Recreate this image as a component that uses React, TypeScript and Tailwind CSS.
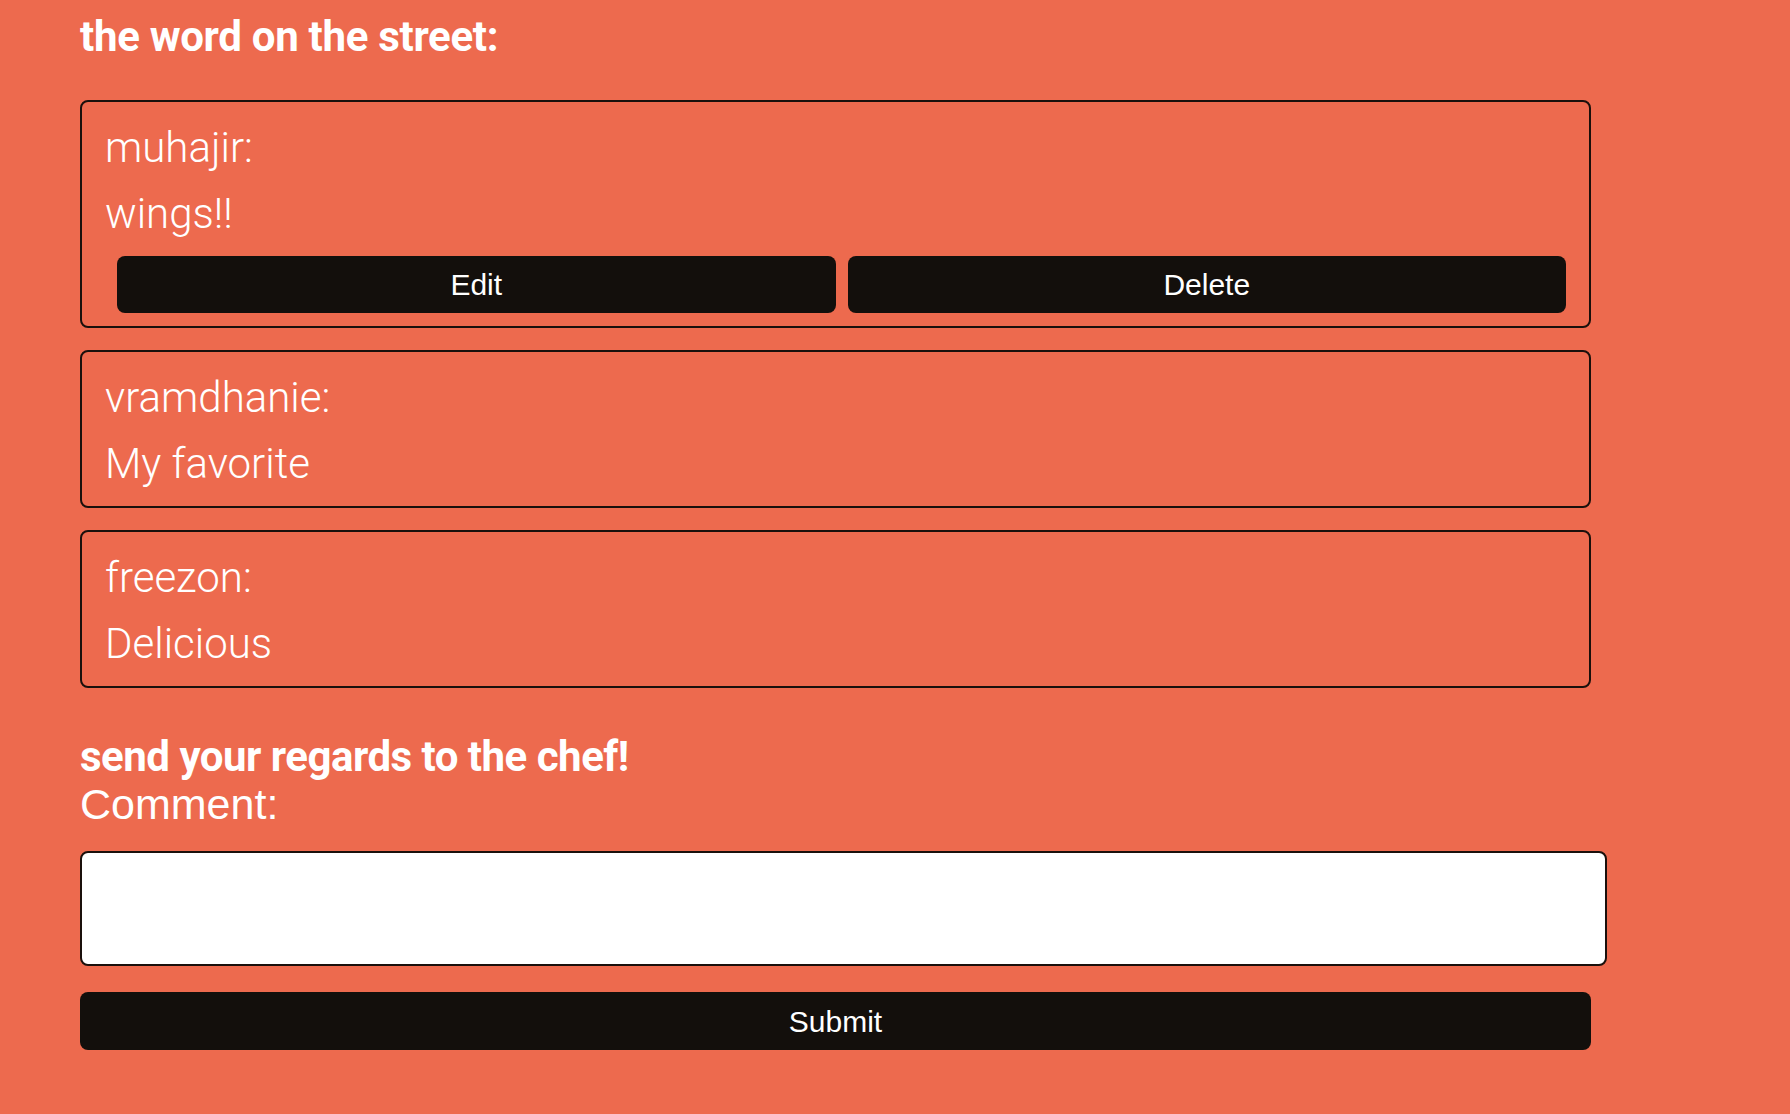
const comments = [
  { user: "muhajir", text: "wings!!", own: true },
  { user: "vramdhanie", text: "My favorite", own: false },
  { user: "freezon", text: "Delicious", own: false },
];

const CommentCard = ({ user, text, own }: { user: string; text: string; own: boolean }) => {
  return (
    <div
      className={`border-2 border-[#1a100c] rounded-lg px-[23px] pt-[21px] ${own ? "pb-[13px]" : "pb-[17px]"}`}
    >
      <p className="text-[42px] leading-[50px] font-light mb-4">{user}:</p>
      <p className="text-[42px] leading-[50px] font-light">{text}</p>
      {own && (
        <div className="flex mt-[17px]">
          <button className="flex-1 ml-3 h-[57px] rounded-lg bg-[#130f0c] text-white text-[30px] font-['Liberation_Sans',Arial,sans-serif]">
            Edit
          </button>
          <button className="flex-1 ml-3 h-[57px] rounded-lg bg-[#130f0c] text-white text-[30px] font-['Liberation_Sans',Arial,sans-serif]">
            Delete
          </button>
        </div>
      )}
    </div>
  );
};

export default function App() {
  return (
    <div className="min-h-[1114px] w-full bg-[#ed6a4e] text-white font-['Roboto','Noto_Sans',sans-serif]">
      <div className="pl-[80px] pt-[12px] pb-[60px]">
        <h2 className="text-[42px] leading-[50px] font-bold tracking-[-0.3px]">the word on the street:</h2>

        <div className="w-[1511px] mt-[38px] flex flex-col gap-[22px]">
          {comments.map((c) => (
            <CommentCard key={c.user} {...c} />
          ))}
        </div>

        <h2 className="mt-[46px] text-[42px] leading-[46px] font-bold tracking-[-0.5px]">
          send your regards to the chef!
        </h2>
        <form className="flex flex-col">
          <label className="text-[43px] leading-[48px] font-['Liberation_Sans',Arial,sans-serif]">Comment:</label>
          <textarea className="mt-[23px] w-[1527px] h-[115px] bg-white border-2 border-[#1a100c] rounded-lg resize-none text-black p-2" />
          <button
            type="button"
            className="mt-[26px] w-[1511px] h-[58px] rounded-lg bg-[#130f0c] text-white text-[30px] font-['Liberation_Sans',Arial,sans-serif]"
          >
            Submit
          </button>
        </form>
      </div>
    </div>
  );
}
